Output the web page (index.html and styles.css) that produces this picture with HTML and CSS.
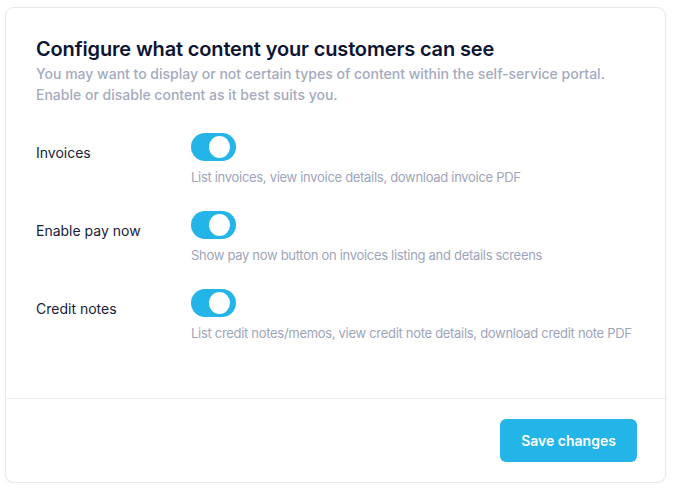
FILE: index.html
```html
<!DOCTYPE html>
<html lang="en">
<head>
<meta charset="utf-8">
<title>Configure content</title>
<link rel="stylesheet" href="styles.css">
</head>
<body>
<div class="card">
  <div class="card-body">
    <h1 class="title">Configure what content your customers can see</h1>
    <p class="subtitle">You may want to display or not certain types of content within the self-service portal. Enable or disable content as it best suits you.</p>
    <div class="settings">
      <div class="setting">
        <div class="label">Invoices</div>
        <div class="control">
          <span class="toggle"><span class="knob"></span></span>
          <div class="desc">List invoices, view invoice details, download invoice PDF</div>
        </div>
      </div>
      <div class="setting">
        <div class="label">Enable pay now</div>
        <div class="control">
          <span class="toggle"><span class="knob"></span></span>
          <div class="desc">Show pay now button on invoices listing and details screens</div>
        </div>
      </div>
      <div class="setting">
        <div class="label">Credit notes</div>
        <div class="control">
          <span class="toggle"><span class="knob"></span></span>
          <div class="desc">List credit notes/memos, view credit note details, download credit note PDF</div>
        </div>
      </div>
    </div>
  </div>
  <div class="card-footer">
    <button class="btn">Save changes</button>
  </div>
</div>
</body>
</html>
```

FILE: styles.css
```css
* { box-sizing: border-box; }
html, body { margin: 0; background: #ffffff; }
body {
  padding: 7px 8px 0 5px;
  font-family: Inter, "Noto Sans", "Liberation Sans", sans-serif;
}
.card {
  width: 661px;
  height: 476px;
  border: 1px solid #e7e9ee;
  border-radius: 9px;
  box-shadow: 0 1px 3px rgba(15, 23, 42, 0.05);
  background: #fff;
  display: flex;
  flex-direction: column;
}
.card-body {
  padding: 27px 30px 0 30px;
  height: 391px;
  border-bottom: 1px solid #eceef2;
}
.title {
  margin: 0;
  font-size: 20px;
  line-height: 28px;
  font-weight: 600;
  color: #0c1533;
  letter-spacing: -0.15px;
}
.subtitle {
  margin: 0;
  font-size: 14px;
  line-height: 21px;
  font-weight: 500;
  color: #a4aac0;
}
.settings {
  margin-top: 28px;
  display: flex;
  flex-direction: column;
  gap: 25px;
}
.setting {
  display: grid;
  grid-template-columns: 155px 1fr;
}
.label {
  padding-top: 10px;
  font-size: 14px;
  line-height: 20px;
  font-weight: 400;
  color: #17223a;
}
.control {
  display: flex;
  flex-direction: column;
  align-items: flex-start;
}
.toggle {
  width: 45px;
  height: 28px;
  border-radius: 14px;
  background: #23b5e8;
  display: flex;
  align-items: center;
  justify-content: flex-end;
  padding-right: 6px;
}
.knob {
  width: 21px;
  height: 22px;
  border-radius: 50%;
  background: #fff;
}
.desc {
  margin-top: 7px;
  font-size: 13px;
  line-height: 18px;
  letter-spacing: -0.3px;
  color: #9ea5ba;
  white-space: nowrap;
}
.card-footer {
  flex: 1;
  display: flex;
  justify-content: flex-end;
  align-items: flex-start;
  padding: 20px 28px 0 0;
}
.btn {
  width: 137px;
  height: 43px;
  border: none;
  border-radius: 6px;
  background: #23b5e8;
  color: #fff;
  font-family: Inter, "Noto Sans", "Liberation Sans", sans-serif;
  font-size: 14px;
  font-weight: 600;
}
```
